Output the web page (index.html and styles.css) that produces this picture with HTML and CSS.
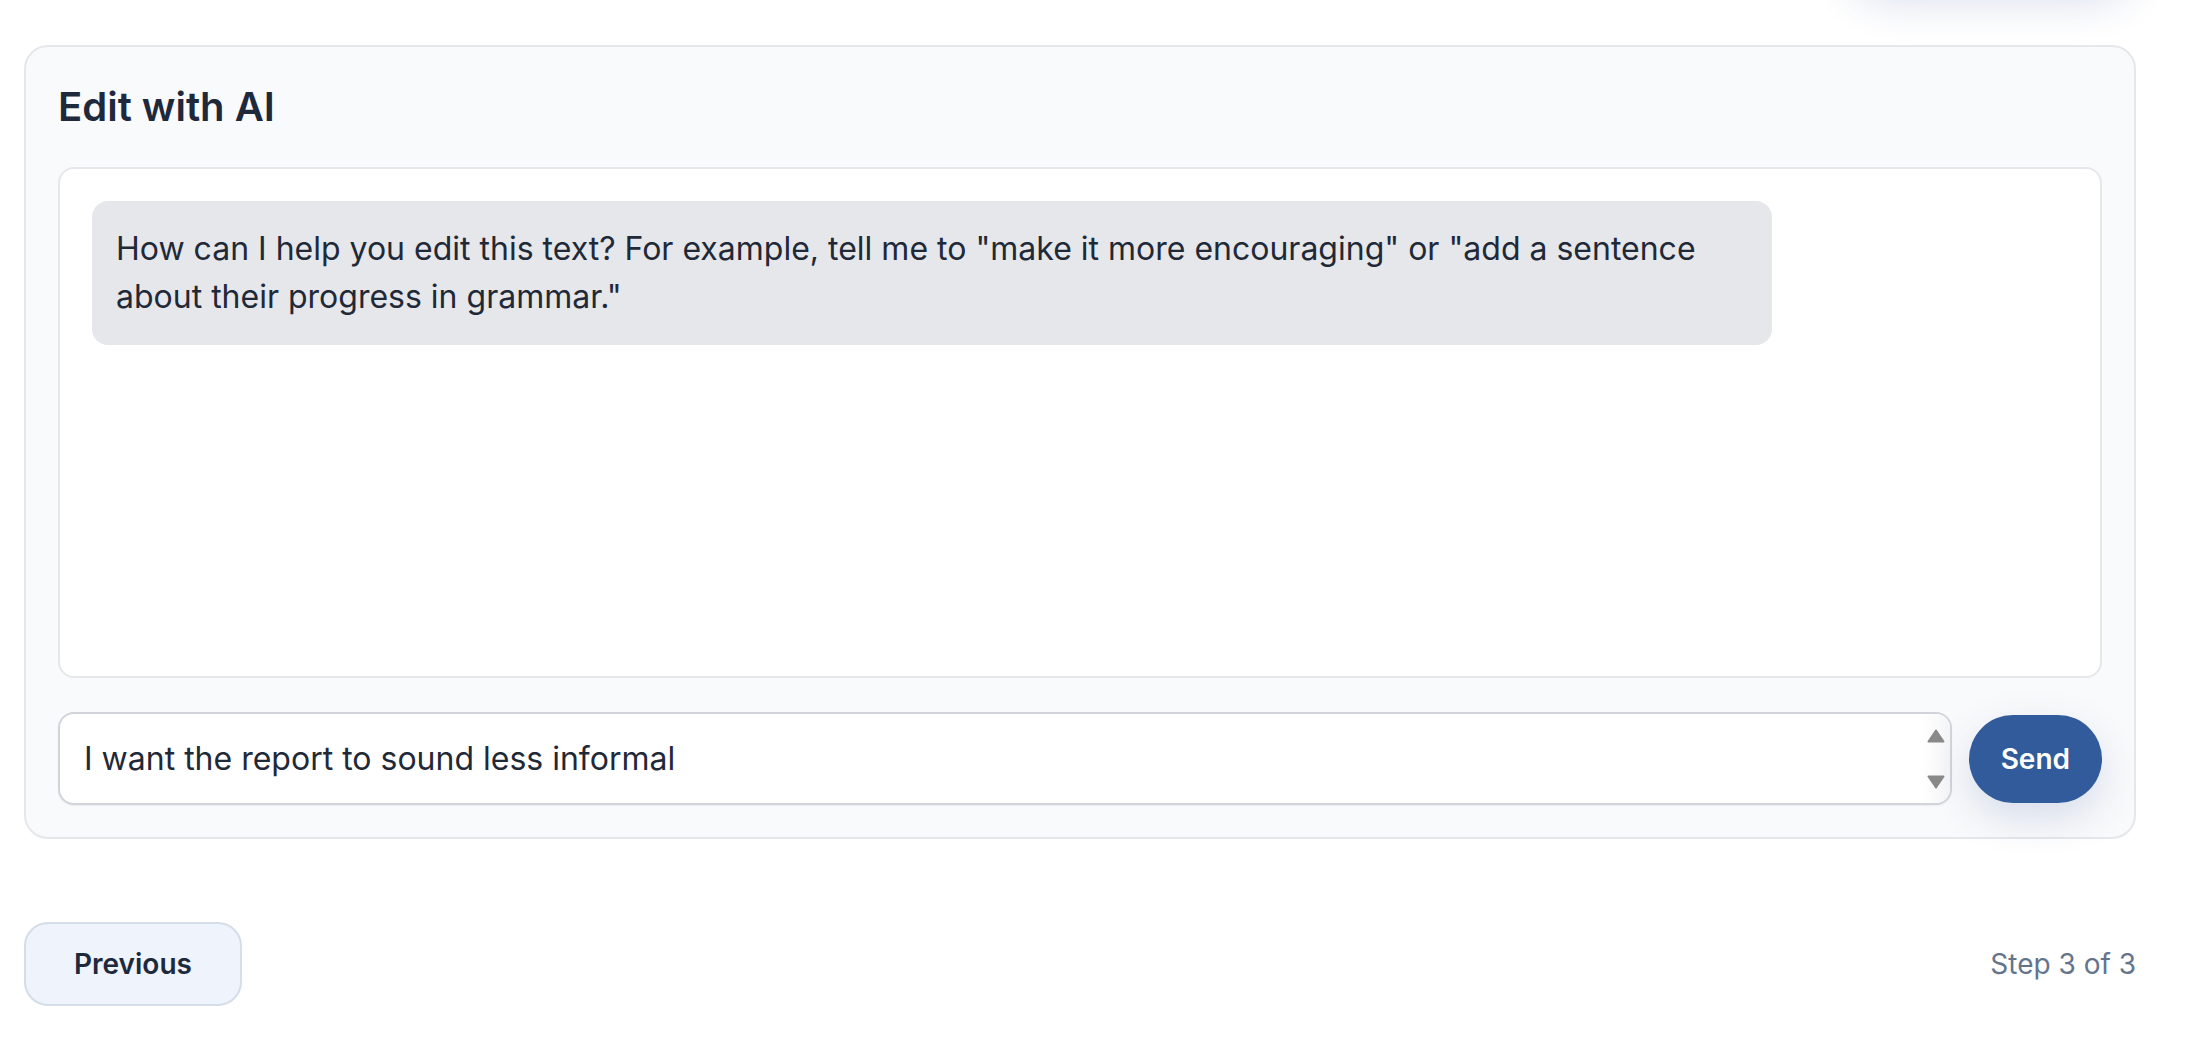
FILE: index.html
```html
<!DOCTYPE html>
<html lang="en">
<head>
<meta charset="utf-8">
<title>Edit with AI</title>
<link rel="stylesheet" href="styles.css">
</head>
<body>
<div class="page">
  <div class="top-row"><div class="ghost-btn"></div></div>
  <section class="card">
    <h2 class="card-title">Edit with AI</h2>
    <div class="messages">
      <div class="bubble">How can I help you edit this text? For example, tell me to "make it more encouraging" or "add a sentence about their progress in grammar."</div>
    </div>
    <div class="input-row">
      <div class="input-box">
        <textarea class="input" rows="1">I want the report to sound less informal</textarea>
        <div class="scrollbar">
          <svg class="arrow" width="18" height="14" viewBox="0 0 18 14"><path d="M9 1.5 L16.5 12.5 H1.5 Z" fill="#8a8a8a" stroke="#8a8a8a" stroke-width="2" stroke-linejoin="round"/></svg>
          <svg class="arrow" width="18" height="14" viewBox="0 0 18 14"><path d="M9 12.5 L16.5 1.5 H1.5 Z" fill="#8a8a8a" stroke="#8a8a8a" stroke-width="2" stroke-linejoin="round"/></svg>
        </div>
      </div>
      <button class="send-btn">Send</button>
    </div>
  </section>
  <footer class="footer">
    <button class="prev-btn">Previous</button>
    <span class="step">Step 3 of 3</span>
  </footer>
</div>
</body>
</html>
```
FILE: styles.css
```css
html, body {
  margin: 0;
  background: #ffffff;
  font-family: Inter, "Noto Sans", "Liberation Sans", sans-serif;
  color: #1f2937;
}

.page {
  width: 2112px;
  margin-left: 24px;
}

.top-row {
  display: flex;
  justify-content: flex-end;
  height: 88px;
  margin-top: -100px;
  margin-bottom: 57px;
}

.ghost-btn {
  width: 290px;
  height: 88px;
  border-radius: 44px;
  background: #315b9b;
  box-shadow: 0 15px 42px rgba(40, 70, 150, 0.16);
}

.card {
  background: #f9fafb;
  border: 2px solid #e5e7eb;
  border-radius: 24px;
  padding: 32px;
}

.card-title {
  margin: 0 0 32px;
  font-size: 40px;
  line-height: 56px;
  font-weight: 600;
  color: #1e293b;
}

.messages {
  box-sizing: border-box;
  height: 511px;
  background: #ffffff;
  border: 2px solid #e5e7eb;
  border-radius: 16px;
  padding: 32px;
  display: flex;
  flex-direction: column;
  align-items: flex-start;
}

.bubble {
  box-sizing: border-box;
  max-width: 85%;
  background: #e5e7eb;
  border-radius: 16px;
  padding: 24px;
  font-size: 32px;
  line-height: 48px;
  color: #1f2937;
}

.input-row {
  margin-top: 34px;
  display: flex;
  align-items: center;
  gap: 17px;
}

.input-box {
  flex: 1;
  box-sizing: border-box;
  height: 93px;
  display: flex;
  background: #ffffff;
  border: 2px solid #d1d5db;
  border-radius: 16px;
  box-shadow: 0 1px 2px rgba(0, 0, 0, 0.06);
  overflow: hidden;
}

.input {
  flex: 1;
  border: 0;
  outline: 0;
  resize: none;
  overflow: hidden;
  background: transparent;
  font-family: Inter, "Noto Sans", "Liberation Sans", sans-serif;
  font-size: 32px;
  line-height: 48px;
  color: #1f2937;
  padding: 21px 24px 20px;
  margin: 0;
}

.scrollbar {
  width: 28px;
  display: flex;
  flex-direction: column;
  justify-content: space-between;
  align-items: center;
  padding: 15px 0 14px;
  background: linear-gradient(to right, #ffffff, #f4f5f7);
}

.arrow {
  display: block;
}

.send-btn {
  height: 88px;
  padding: 0 32px;
  border: 0;
  border-radius: 44px;
  background: #315b9b;
  color: #ffffff;
  font-family: Inter, "Noto Sans", "Liberation Sans", sans-serif;
  font-size: 28px;
  font-weight: 600;
  box-shadow: 0 15px 40px rgba(40, 70, 150, 0.16);
}

.footer {
  margin-top: 83px;
  display: flex;
  justify-content: space-between;
  align-items: center;
}

.prev-btn {
  padding: 20px 48px;
  background: #eff3fb;
  border: 2px solid #d5dde9;
  border-radius: 24px;
  font-family: Inter, "Noto Sans", "Liberation Sans", sans-serif;
  font-size: 28px;
  line-height: 40px;
  font-weight: 600;
  color: #1e293b;
}

.step {
  font-size: 28px;
  line-height: 40px;
  color: #64748b;
}
```
